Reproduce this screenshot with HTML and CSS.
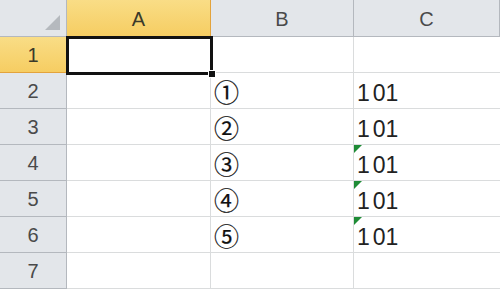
FILE: index.html
```html
<!DOCTYPE html>
<html lang="ja">
<head>
    <meta charset="UTF-8">
    <title>Sheet1</title>
    <link rel="stylesheet" href="styles.css">
</head>
<body>
    <div class="sheet">
        <div class="corner"><span class="corner-tri"></span></div>
        <div class="col-head active">A</div>
        <div class="col-head">B</div>
        <div class="col-head">C</div>

        <div class="row-head active">1</div>
        <div class="cell selected"><span class="fill-handle"></span></div>
        <div class="cell"></div>
        <div class="cell"></div>

        <div class="row-head">2</div>
        <div class="cell"></div>
        <div class="cell circ">①</div>
        <div class="cell num"><span class="one">1</span>01</div>

        <div class="row-head">3</div>
        <div class="cell"></div>
        <div class="cell circ">②</div>
        <div class="cell num"><span class="one">1</span>01</div>

        <div class="row-head">4</div>
        <div class="cell"></div>
        <div class="cell circ">③</div>
        <div class="cell num flag"><span class="one">1</span>01</div>

        <div class="row-head">5</div>
        <div class="cell"></div>
        <div class="cell circ">④</div>
        <div class="cell num flag"><span class="one">1</span>01</div>

        <div class="row-head">6</div>
        <div class="cell"></div>
        <div class="cell circ">⑤</div>
        <div class="cell num flag"><span class="one">1</span>01</div>

        <div class="row-head">7</div>
        <div class="cell"></div>
        <div class="cell"></div>
        <div class="cell"></div>
    </div>
</body>
</html>
```

FILE: styles.css
```css
:root {
    --grid-line: #dadcdd;
    --head-bg: #e3e6ea;
    --head-line: #b4b8be;
    --head-text: #4a4a4a;
    --active-line: #e3a33c;
}

* {
    box-sizing: border-box;
    margin: 0;
    padding: 0;
}

body {
    background: #ffffff;
    font-family: 'Liberation Sans', 'Noto Sans CJK JP', sans-serif;
    overflow: hidden;
}

.sheet {
    display: grid;
    grid-template-columns: 67px 144px 143px 143px 3px;
    grid-template-rows: 37px repeat(7, 36px);
    width: 500px;
    height: 290px;
}

.corner {
    grid-row: 1;
    grid-column: 1;
    position: relative;
    background: var(--head-bg);
    border-right: 1px solid var(--head-line);
    border-bottom: 1px solid var(--head-line);
}

.corner-tri {
    position: absolute;
    right: 6px;
    bottom: 6px;
    width: 0;
    height: 0;
    border-left: 15px solid transparent;
    border-bottom: 15px solid #b5b9be;
}

.col-head {
    grid-row: 1;
    background: var(--head-bg);
    border-right: 1px solid var(--head-line);
    border-bottom: 1px solid var(--head-line);
    color: var(--head-text);
    font-size: 20px;
    display: flex;
    align-items: center;
    justify-content: center;
    padding-top: 2px;
}

.col-head:nth-child(4) {
    grid-column: 4 / span 2;
}

.row-head {
    grid-column: 1;
    background: var(--head-bg);
    border-right: 1px solid var(--head-line);
    border-bottom: 1px solid var(--head-line);
    color: var(--head-text);
    font-size: 20px;
    display: flex;
    align-items: center;
    justify-content: center;
    padding-top: 2px;
}

.col-head.active,
.row-head.active {
    background: linear-gradient(#f9dd86, #f6cd62);
    border-color: var(--active-line);
    color: #3a3a2a;
}

.cell {
    position: relative;
    border-right: 1px solid var(--grid-line);
    border-bottom: 1px solid var(--grid-line);
    font-size: 23px;
    line-height: 1;
    color: #222;
    display: flex;
    align-items: center;
    padding: 5px 3px 0;
}

.cell:nth-child(4n) {
    grid-column: 4 / span 2;
    border-right: 0;
}

.cell.selected {
    border: 3px solid #111;
    margin: -1px -2px -2px -1px;
    z-index: 1;
}

.fill-handle {
    position: absolute;
    right: -6px;
    bottom: -6px;
    width: 8px;
    height: 8px;
    background: #111;
    border: 1px solid #fff;
}

.circ {
    font-family: 'Noto Sans CJK JP', sans-serif;
    font-size: 25px;
    color: #111;
    -webkit-text-stroke: 0.2px #111;
    padding: 2px 0 0 3px;
}

.num .one {
    margin-right: 3px;
}

.flag::before {
    content: '';
    position: absolute;
    left: 0;
    top: 0;
    border-top: 8px solid #1e8c36;
    border-right: 8px solid transparent;
}
```
